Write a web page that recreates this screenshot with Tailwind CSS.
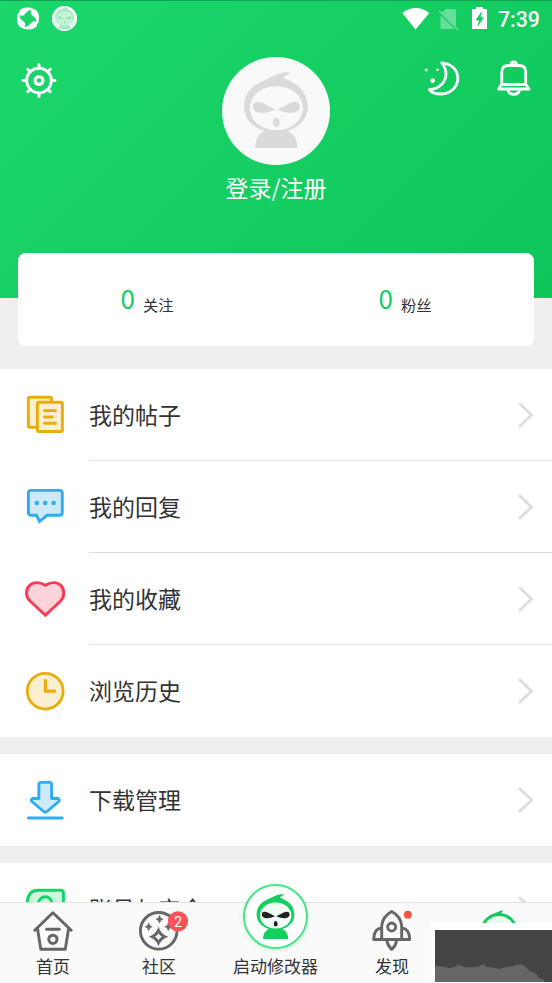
<!DOCTYPE html>
<html lang="zh-CN">
<head>
<meta charset="utf-8">
<title>我的</title>
<script src="https://cdn.jsdelivr.net/npm/@tailwindcss/browser@4"></script>
</head>
<body class="font-['Roboto','Noto_Sans_CJK_SC',sans-serif] bg-[#efefef]">
<svg class="hidden">
  <symbol id="mascot" viewBox="102 65 192 229">
    <path fill="currentColor" fill-rule="evenodd" d="M102 168C102 134 122 110 150 97C180 82 205 67 230 65Q246 66 238 71Q222 77 221 84Q234 88 246 95C276 110 294 138 294 170C294 206 268 232 232 243C251 250 263 270 263 294H135C135 268 147 250 164 243C128 232 102 206 102 168ZM199 108C153 108 119 138 119 174S153 240 199 240S279 211 279 174S245 108 199 108Z"/>
  </symbol>
  <symbol id="face" viewBox="102 65 192 229">
    <path fill="currentColor" d="M128 168C128 155 146 152 161 160Q178 170 196 178Q170 190 150 188C135 186 128 178 128 168ZM270 168C270 155 252 152 237 160Q220 170 202 178Q228 190 248 188C263 186 270 178 270 168Z"/>
    <ellipse cx="199" cy="217" rx="10" ry="14" fill="currentColor"/>
  </symbol>
  <symbol id="chevron" viewBox="0 0 16 26"><path d="M2 2L13.500 13L2 24" fill="none" stroke="#dedede" stroke-width="3" stroke-linecap="round"/></symbol>
</svg>

<div class="relative flex h-[983px] w-[552px] flex-col overflow-hidden">
  <header class="h-[298px] shrink-0 border-t border-[#12a452] bg-linear-135 from-[#1bd76b] to-[#0ec65a] text-white">
    <div class="flex h-9 items-start justify-between">
      <svg class="h-9 w-20" viewBox="0 1 80 36">
        <g transform="translate(28 18.500)" fill="#fff">
          <path id="blade" d="M-10.600 -3.500C-11.800 2 -10.500 7 -7.500 8.700C-4.500 9.800 -2 7.500 -3 4.800C-4 2.500 -7 1.800 -7.800 -.5C-8.500 -2.500 -8 -4.500 -7 -6.800Q-9.700 -6.500 -10.600 -3.500Z"/>
          <use href="#blade" transform="rotate(90)"/><use href="#blade" transform="rotate(180)"/><use href="#blade" transform="rotate(270)"/>
        </g>
        <circle cx="64.500" cy="18.500" r="12.500" fill="#e0f8e9"/>
        <circle cx="64.500" cy="18.500" r="11.800" fill="none" stroke="#fff" stroke-width="1.200"/>
        <use href="#mascot" x="54" y="7.500" width="21" height="22" color="#a5eac2"/>
        <ellipse cx="64.500" cy="19" rx="8" ry="6.500" fill="#c6f2d7"/>
        <use href="#face" x="54" y="7.500" width="21" height="22" color="#98e7b9"/>
      </svg>
      <div class="flex items-start pr-3">
        <svg class="h-9 w-[98px]" viewBox="400 1 98 36">
          <path d="M402.300 13Q416 3 429.300 13L415.600 29.500Z" fill="#fff"/>
          <path d="M446 9H454.500Q456 9 456 10.500V27L442 12.500ZM440.500 15L454.500 29H442Q440.500 29 440.500 27.500Z" fill="#fff" fill-opacity=".35"/>
          <path d="M439 10.500L458 30" stroke="#fff" stroke-opacity=".35" stroke-width="1.600"/>
          <path d="M476 7H483V9H487V29H472V9H476Z" fill="#fff"/>
          <path d="M481.500 12L476 20H479.200L478 26L483.500 17.500H480.300Z" fill="#14cd61" stroke="#14cd61" stroke-width=".6"/>
        </svg>
        <div class="mt-1 w-[42px] whitespace-nowrap text-[21.300px] leading-[29px] font-medium">7:39</div>
      </div>
    </div>
    <div class="flex h-[130px] items-start justify-between px-[18px] pt-5">
      <svg class="mt-1 h-[42px] w-[182px]" viewBox="18 61 182 42" fill="none" stroke="#fff" stroke-width="3" stroke-linecap="round">
        <circle cx="39" cy="80.500" r="12.300"/><circle cx="39" cy="80.500" r="3.900" stroke-width="3.200"/>
        <path d="M39 68V64.500M39 93V96.500M26.500 80.500H23M51.500 80.500H55M30.200 71.700L27.800 69.300M47.800 71.700L50.200 69.300M30.200 89.300L27.800 91.700M47.800 89.300L50.200 91.700"/>
      </svg>
      <div class="flex flex-col items-center">
        <div class="flex size-[108px] items-center justify-center rounded-full bg-[#f9f9f9] text-[#dadada]">
          <svg class="-mt-0.5 h-[76px] w-[64px]" viewBox="0 0 64 76"><use href="#mascot" width="64" height="76"/><use href="#face" width="64" height="76"/></svg>
        </div>
        <div class="mt-[5px] font-['Noto_Sans_CJK_SC',sans-serif] text-[23px] leading-[34px]">登录/注册</div>
      </div>
      <svg class="h-[42px] w-[182px]" viewBox="352 57 182 42" fill="none" stroke="#fff" stroke-width="2.800" stroke-linejoin="round" stroke-linecap="round">
        <path d="M441.700 62.800C452.500 63.500 457.800 71 457.800 78C457.800 87.500 450 94 441.500 94C436 94 431.500 92.500 429.300 89.600C439 89 446 82.500 446 74C446 69 444.500 66 441.700 62.800Z"/>
        <g fill="#fff" stroke="none"><circle cx="426.200" cy="70" r="1.500"/><circle cx="437.500" cy="69.800" r="1.400"/><circle cx="432.700" cy="80.600" r="2.400"/></g>
        <path d="M501.800 84V72Q501.800 65.500 508.500 65.500H519Q525.700 65.500 525.700 72V84L529 89H498.500ZM501.800 84.500H525.700M510.800 65Q510.800 62 513.700 62T516.600 65M507.800 90Q509 94.300 513.700 94.300T519.600 90"/>
      </svg>
    </div>
  </header>

  <section class="z-10 mx-[18px] -mt-[45px] flex h-[93px] shrink-0 rounded-[8px] bg-white font-['Noto_Sans_CJK_SC',sans-serif]">
    <div class="flex flex-1 items-start justify-center"><span class="pt-[27px] text-[26px] leading-9 text-[#16cc62]">0</span><span class="ml-2 pt-[33px] text-[15.300px] leading-9 text-[#333]">关注</span></div>
    <div class="flex flex-1 items-start justify-center"><span class="pt-[27px] text-[26px] leading-9 text-[#16cc62]">0</span><span class="ml-2 pt-[33px] text-[15.300px] leading-9 text-[#333]">粉丝</span></div>
  </section>

  <main class="mt-[23px] flex h-[533px] shrink-0 flex-col gap-[17px] overflow-hidden text-[23px] text-[#333]">
    <div class="shrink-0 bg-white">
      <div class="flex h-[92px] pl-[21px]">
        <svg class="mt-[22px] h-12 w-12" viewBox="21 391 48 48" stroke="#e8ac0c" stroke-width="2.900" fill="#fcefd0" stroke-linejoin="round" stroke-linecap="round">
          <rect x="28.300" y="397.300" width="23.300" height="30" rx="1.500"/><rect x="37.400" y="402.300" width="25" height="29.200" rx="1.500"/><path d="M44.500 410.600H55.500M44.500 417H52.300M44.500 423.200H55.500"/>
        </svg>
        <div class="ml-5 flex flex-1 items-center justify-between border-b border-[#dedede] pr-[18px]"><span class="pt-[5px]">我的帖子</span><svg class="h-[26px] w-4"><use href="#chevron"/></svg></div>
      </div>
      <div class="flex h-[92px] pl-[21px]">
        <svg class="mt-[22px] h-12 w-12" viewBox="21 483 48 48" stroke="#2fadf2" stroke-width="2.900" fill="#cdeafa">
          <path d="M31 490.400H59.500Q62.300 490.400 62.300 493.200V512.300Q62.300 515.300 59.500 515.300H47L39.500 521.500L36.500 515.300H31Q28.400 515.300 28.400 512.300V493.200Q28.400 490.400 31 490.400Z"/>
          <g fill="#2fadf2" stroke="none"><circle cx="36.800" cy="503" r="2.300"/><circle cx="45.200" cy="503" r="2.300"/><circle cx="53.600" cy="503" r="2.300"/></g>
        </svg>
        <div class="ml-5 flex flex-1 items-center justify-between border-b border-[#dedede] pr-[18px]"><span class="pt-[5px]">我的回复</span><svg class="h-[26px] w-4"><use href="#chevron"/></svg></div>
      </div>
      <div class="flex h-[92px] pl-[21px]">
        <svg class="mt-[22px] h-12 w-12" viewBox="21 575 48 48" stroke="#fb3a55" stroke-width="2.900" fill="#fed3d9">
          <path d="M45.300 615.200L30 601C26.800 598 26.500 595.500 26.500 593C26.500 586.500 31.500 582.600 36.500 582.600C40.500 582.600 43 583.800 45.300 585.300C47.600 583.800 50 582.600 54 582.600C59 582.600 63.800 586.500 63.800 593C63.800 595.500 63.500 598 60.500 601Z"/>
        </svg>
        <div class="ml-5 flex flex-1 items-center justify-between border-b border-[#dedede] pr-[18px]"><span class="pt-[5px]">我的收藏</span><svg class="h-[26px] w-4"><use href="#chevron"/></svg></div>
      </div>
      <div class="flex h-[92px] pl-[21px]">
        <svg class="mt-[22px] h-12 w-12" viewBox="21 667 48 48" stroke="#e8ac0c" stroke-width="2.800" fill="#fcefd0" stroke-linecap="round">
          <circle cx="45.200" cy="691.200" r="17.900"/><path d="M45.400 680.500V691.200H54.500" stroke-width="3.200" fill="none" stroke-linejoin="round"/>
        </svg>
        <div class="ml-5 flex flex-1 items-center justify-between pr-[18px]"><span class="pt-1">浏览历史</span><svg class="h-[26px] w-4"><use href="#chevron"/></svg></div>
      </div>
    </div>
    <div class="flex h-[92px] shrink-0 bg-white pl-[21px]">
      <svg class="mt-[22px] h-12 w-12" viewBox="21 776 48 48" stroke="#2fadf2" stroke-width="2.900" fill="#cdeafa" stroke-linejoin="round" stroke-linecap="round">
        <path d="M41 782.400H49.500Q51.600 782.400 51.600 784.500V798.500H58Q60.300 799.500 58.700 801.500L47 811.500Q45.300 813 43.600 811.500L32 801.500Q30.400 799.500 32.500 798.500H38.900V784.500Q38.900 782.400 41 782.400Z"/><path d="M28.400 818H62.200"/>
      </svg>
      <div class="ml-5 flex flex-1 items-center justify-between pr-[18px]"><span class="pt-1">下载管理</span><svg class="h-[26px] w-4"><use href="#chevron"/></svg></div>
    </div>
    <div class="flex h-[92px] shrink-0 bg-white pl-[21px]">
      <svg class="mt-[22px] h-12 w-12" viewBox="21 885 48 48" stroke="#12d666" stroke-width="3" fill="#cff6de">
        <path d="M27 930V903Q28 890.300 38 890.300H61Q63.400 890.300 63.400 892.700V930Z"/><circle cx="45.200" cy="903.500" r="6.700"/>
      </svg>
      <div class="ml-5 flex flex-1 items-center justify-between pr-[18px]"><span class="pt-1">账号与安全</span><svg class="h-[26px] w-4"><use href="#chevron"/></svg></div>
    </div>
  </main>

  <nav class="z-10 flex h-[81px] shrink-0 border-t border-[#e2e2e2] bg-[#fafafa] text-[17px] leading-6 text-[#333]">
    <div class="flex w-[106px] flex-col items-center pt-1.5">
      <svg class="h-[45px] w-[46px]" viewBox="30 909 46 45" fill="none" stroke="#666" stroke-width="2.900" stroke-linejoin="round" stroke-linecap="round">
        <path d="M34.800 930.300L52.900 912.800L71.200 930.300M37.500 928.500L40.800 949.300H65.300L68.600 928.500"/><path d="M46.700 929.200H59.300"/><circle cx="52.900" cy="939.300" r="4.100" stroke-width="3"/>
      </svg>
      <span class="mt-px">首页</span>
    </div>
    <div class="flex w-[106px] flex-col items-center pt-1.5">
      <svg class="h-[45px] w-[60px]" viewBox="129 909 60 45">
        <circle cx="158.700" cy="930.800" r="18.300" fill="none" stroke="#666" stroke-width="2.900"/>
        <path fill-rule="evenodd" d="M158.500 926.800Q160.800 934.500 168.300 936.800Q160.800 939.100 158.500 946.300Q156.200 939.100 148.700 936.800Q156.200 934.500 158.500 926.800ZM158.500 933.300Q157.500 935.800 155 936.800Q157.500 937.800 158.500 940.300Q159.500 937.800 162 936.800Q159.500 935.800 158.500 933.300Z" fill="#666"/>
        <path d="M159.500 915.500Q160 918.800 163 919.300Q160 919.900 159.500 923.200Q159 919.900 156 919.300Q159 918.800 159.500 915.500ZM148.700 923Q149.200 926.300 152.200 926.800Q149.200 927.400 148.700 930.700Q148.200 927.400 145.200 926.800Q148.200 926.300 148.700 923ZM168.300 923Q168.800 926.300 171.800 926.800Q168.800 927.400 168.300 930.700Q167.800 927.400 164.800 926.800Q167.800 926.300 168.300 923Z" fill="#666" stroke="#666" stroke-width=".7"/>
        <circle cx="178" cy="921.300" r="10.100" fill="#fa5058"/>
        <text x="178" y="926.700" text-anchor="middle" font-size="14.500" fill="#fff">2</text>
      </svg>
      <span class="mt-px">社区</span>
    </div>
    <div class="-mt-[19px] flex w-[127px] flex-col items-center">
      <div class="flex size-[65px] shrink-0 items-center justify-center rounded-full border-2 border-[#4be387] bg-white shadow-[0_1px_4px_#12d66640]">
        <svg class="h-[45px] w-[39px]" viewBox="0 0 39 45"><ellipse cx="19.500" cy="21" rx="17" ry="13.500" fill="#effdf4"/><use href="#mascot" width="39" height="45" color="#12d060"/><use href="#face" width="39" height="45" color="#222"/></svg>
      </div>
      <span class="mt-1.5">启动修改器</span>
    </div>
    <div class="flex w-[106px] flex-col items-center pt-1.5">
      <svg class="h-[45px] w-[46px]" viewBox="369 909 46 45" fill="none" stroke="#666" stroke-width="2.900" stroke-linejoin="round">
        <path d="M381.700 939.500V926Q382.500 916.500 391.700 911.500Q401 916.500 401.700 926V939.500ZM381.500 928C376.500 928.500 373.700 932 373.700 939.500H381.700M401.900 928C406.900 928.500 409.700 932 409.700 939.500H401.700M386.800 940Q387.500 945.500 391.700 949.500Q396 945.500 396.700 940"/><circle cx="391.700" cy="927" r="4"/><circle cx="407.800" cy="914.700" r="3.900" fill="#f5523f" stroke="none"/>
      </svg>
      <span class="mt-px">发现</span>
    </div>
    <div class="flex w-[107px] flex-col items-center pt-1.5">
      <svg class="h-[45px] w-[46px]" viewBox="475.500 909 46 45">
        <ellipse cx="498.500" cy="931" rx="17" ry="16.500" fill="#e8fcf0" stroke="#12c95d" stroke-width="2.900"/>
        <path d="M489 916Q495 912.500 501.500 910.200Q503.200 910.500 501.300 912.200L500.500 914.500Z" fill="#12c95d"/>
      </svg>
      <span class="mt-px">我的</span>
    </div>
  </nav>

  <div class="absolute right-0 bottom-0 z-20 h-[60px] w-[121px] bg-white pt-[7px] pl-1">
    <svg class="h-[52px] w-[117px] bg-[#444]" viewBox="0 0 117 52"><path d="M0 52V35.700L7 36.500L15 38.300L20 36.500L24 34.500L30 37.300L37 37.300L43 36.800L48 34L52 37L58 37.500L65 39L71 37L77 36.600L82 34.500L88 35L95 41L101 43.500L104 48L109 50V52Z" fill="#666"/></svg>
  </div>
</div>
</body>
</html>
